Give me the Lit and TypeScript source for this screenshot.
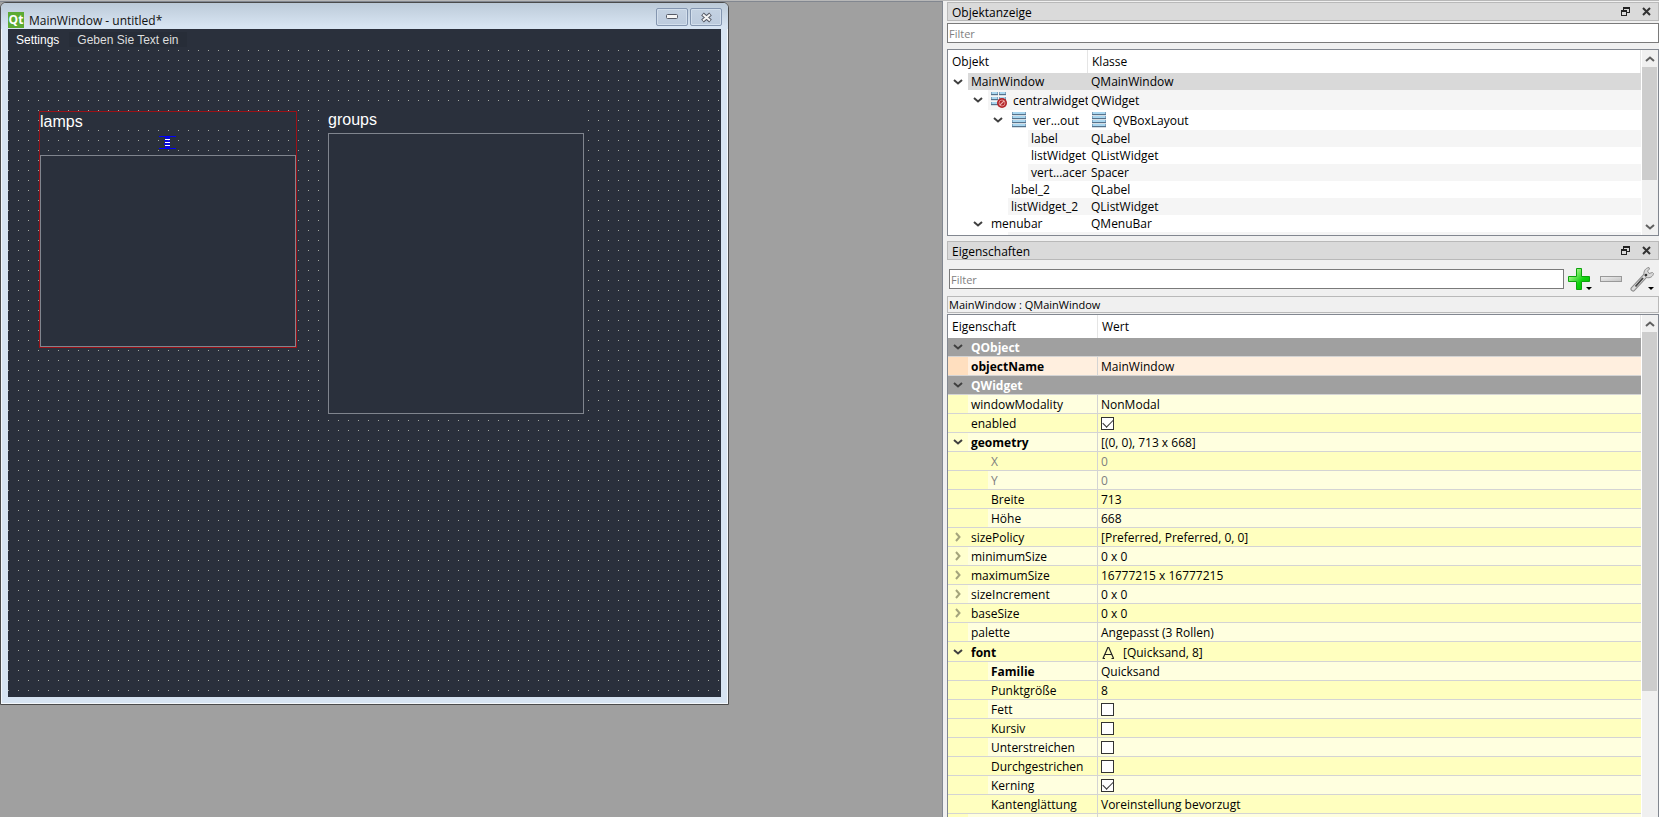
import { LitElement, html, css, svg, nothing } from "lit";
import { customElement } from "lit/decorators.js";
import { classMap } from "lit/directives/class-map.js";
import { styleMap } from "lit/directives/style-map.js";

type Icon = "layout" | "broken" | "font";

interface TreeNode {
  name: string;
  cls: string;
  depth: number;
  open?: boolean;
  icon?: Icon;
  clsIcon?: Icon;
  selected?: boolean;
}

interface Prop {
  name: string;
  value?: string;
  depth: number;
  group?: boolean;
  tone?: "peach";
  bold?: boolean;
  muted?: boolean;
  check?: boolean;
  state?: "open" | "closed";
  icon?: Icon;
}

const TREE: TreeNode[] = [
  { name: "MainWindow", cls: "QMainWindow", depth: 1, open: true, selected: true },
  { name: "centralwidget", cls: "QWidget", depth: 2, open: true, icon: "broken" },
  { name: "ver...out", cls: "QVBoxLayout", depth: 3, open: true, icon: "layout", clsIcon: "layout" },
  { name: "label", cls: "QLabel", depth: 4 },
  { name: "listWidget", cls: "QListWidget", depth: 4 },
  { name: "vert...acer", cls: "Spacer", depth: 4 },
  { name: "label_2", cls: "QLabel", depth: 3 },
  { name: "listWidget_2", cls: "QListWidget", depth: 3 },
  { name: "menubar", cls: "QMenuBar", depth: 2, open: true },
  { name: "", cls: "", depth: 3 },
];

const PROPS: Prop[] = [
  { name: "QObject", depth: 1, group: true, state: "open" },
  { name: "objectName", value: "MainWindow", depth: 1, bold: true, tone: "peach" },
  { name: "QWidget", depth: 1, group: true, state: "open" },
  { name: "windowModality", value: "NonModal", depth: 1 },
  { name: "enabled", check: true, depth: 1 },
  { name: "geometry", value: "[(0, 0), 713 x 668]", depth: 1, bold: true, state: "open" },
  { name: "X", value: "0", depth: 2, muted: true },
  { name: "Y", value: "0", depth: 2, muted: true },
  { name: "Breite", value: "713", depth: 2 },
  { name: "Höhe", value: "668", depth: 2 },
  { name: "sizePolicy", value: "[Preferred, Preferred, 0, 0]", depth: 1, state: "closed" },
  { name: "minimumSize", value: "0 x 0", depth: 1, state: "closed" },
  { name: "maximumSize", value: "16777215 x 16777215", depth: 1, state: "closed" },
  { name: "sizeIncrement", value: "0 x 0", depth: 1, state: "closed" },
  { name: "baseSize", value: "0 x 0", depth: 1, state: "closed" },
  { name: "palette", value: "Angepasst (3 Rollen)", depth: 1 },
  { name: "font", value: "[Quicksand, 8]", depth: 1, bold: true, state: "open", icon: "font" },
  { name: "Familie", value: "Quicksand", depth: 2, bold: true },
  { name: "Punktgröße", value: "8", depth: 2 },
  { name: "Fett", check: false, depth: 2 },
  { name: "Kursiv", check: false, depth: 2 },
  { name: "Unterstreichen", check: false, depth: 2 },
  { name: "Durchgestrichen", check: false, depth: 2 },
  { name: "Kerning", check: true, depth: 2 },
  { name: "Kantenglättung", value: "Voreinstellung bevorzugt", depth: 2 },
  { name: "", value: "", depth: 1 },
];

const bar = (x: number, y: number, w: number) => svg`
  <rect x=${x} y=${y} width=${w} height="3" fill="#7fa3bf"></rect>
  <rect x=${x + 1} y=${y} width=${w - 2} height="2" fill="#a9d6ef"></rect>
  <rect x=${x} y=${y + 2} width=${w} height="1" fill="#56738c"></rect>
  <rect x=${x} y=${y + 3} width=${w} height="1" fill="#d5dde4"></rect>`;

const icons: Record<Icon, unknown> = {
  layout: html`<svg class="icon" viewBox="0 0 16 16" shape-rendering="crispEdges" aria-hidden="true">
    ${[0, 4, 8, 12].map((y) => bar(1, y, 14))}
  </svg>`,
  broken: html`<svg class="icon" viewBox="0 0 16 16" aria-hidden="true">
    ${[0, 5, 10].map((y) => svg`${bar(0, y, 7)}${bar(8, y, 7)}`)}
    <circle cx="11" cy="11" r="5" fill="#b3262a"></circle>
    <circle cx="11" cy="11" r="3" fill="none" stroke="#e08a88" stroke-width="1"></circle>
    <path d="M8.8 13.2 13.2 8.8" stroke="#f0b5b3" stroke-width="1.2"></path>
  </svg>`,
  font: html`<svg class="icon" viewBox="0 0 16 16" aria-hidden="true">
    <path d="M2 14.5 6.8 3.5h1L12.600 14.500M3.800 10.500h7M1.500 14.500h2.500M10.500 14.500h2.500" fill="none" stroke="#222" stroke-width="1.2"></path>
  </svg>`,
};

const chevron = (dir: "down" | "right" | "up") => {
  const d = { down: "M1 3 5 6.500 9 3", up: "M1 7 5 3.500 9 7", right: "M3 1 6.500 5 3 9" }[dir];
  return html`<svg class="chev" viewBox="0 0 10 10" aria-hidden="true">
    <path d=${d} fill="none" stroke="currentColor" stroke-width="2"></path>
  </svg>`;
};

const shared = css`
  * { box-sizing: border-box; }
  button { appearance: none; border: 0; padding: 0; margin: 0; background: none; font: inherit; color: inherit; }
  svg { display: block; flex: none; }
  input { font: inherit; margin: 0; }
`;

const sheet = css`
  :host { display: flex; min-height: 0; background: #fff; border: 1px solid #828790; overflow: hidden; }
  .view { flex: 1; min-width: 0; overflow: hidden; }
  table { width: 100%; table-layout: fixed; border-collapse: separate; border-spacing: 0; }
  th { height: 23px; padding: 0 4px; text-align: left; font-weight: 400; border-right: 1px solid #e5e5e5; }
  td { padding: 0; white-space: nowrap; overflow: hidden; }
  .cell { display: flex; height: 100%; }
  .branch { flex: none; display: flex; justify-content: flex-end; align-items: center; }
  .twist { width: 20px; padding-right: 1px; display: flex; justify-content: center; color: #404040; }
  .text { flex: 1; min-width: 0; display: flex; align-items: center; gap: 6px; padding-left: 3px; }
  .icon { width: 16px; height: 16px; }
  .chev { width: 10px; height: 10px; }
`;

@customElement("scroll-bar")
class ScrollBar extends LitElement {
  static properties = { thumb: { type: Number } };
  declare thumb: number;
  static styles = [
    shared,
    css`
      :host { display: flex; flex-direction: column; width: 17px; flex: none; background: #f0f0f0; padding-right: 1px; border-left: 1px solid #fff; }
      button { height: 17px; flex: none; display: flex; align-items: center; justify-content: center; color: #606060; }
      .chev { width: 10px; height: 10px; }
      .track { flex: 1; min-height: 0; }
      .thumb { background: #cdcdcd; }
    `,
  ];
  render() {
    return html`
      <button aria-label="Nach oben">${chevron("up")}</button>
      <div class="track"><div class="thumb" style=${styleMap({ height: `${this.thumb}%` })}></div></div>
      <button aria-label="Nach unten">${chevron("down")}</button>
    `;
  }
}

@customElement("dock-title")
class DockTitle extends LitElement {
  static styles = [
    shared,
    css`
      :host { display: flex; align-items: center; height: 19px; flex: none; padding: 0 3px 0 4px; gap: 4px; background: #dadada; border: 1px solid #b9b9b9; }
      .name { flex: 1; padding-top: 2px; }
      button { width: 17px; height: 17px; display: grid; place-items: center; }
    `,
  ];
  render() {
    return html`
      <span class="name"><slot></slot></span>
      <button aria-label="Abdocken">
        <svg width="9" height="9" viewBox="0 0 9 9" shape-rendering="crispEdges" fill="#222">
          <path d="M2 0h7v6H6V5h2V2H3v1H2z"></path>
          <path d="M0 3h6v6H0zM1 5v3h4V5z" fill-rule="evenodd"></path>
        </svg>
      </button>
      <button aria-label="Schließen">
        <svg width="9" height="9" viewBox="0 0 9 9"><path d="M1 1l7 7M8 1 1 8" stroke="#333" stroke-width="2"></path></svg>
      </button>
    `;
  }
}

@customElement("object-tree")
class ObjectTree extends LitElement {
  static styles = [
    shared,
    sheet,
    css`
      .c1 { width: 140px; }
      tr { height: 17px; }
      tr.tall { height: 20px; }
      .tall .label { padding-top: 2px; }
      td { height: inherit; }
      .odd .text { background: #f5f5f5; }
      .selected .text { background: #d9d9d9; }
    `,
  ];
  render() {
    return html`
      <div class="view">
        <table>
          <thead><tr><th class="c1">Objekt</th><th>Klasse</th></tr></thead>
          <tbody>
            ${TREE.map(
              (n, i) => html`<tr class=${classMap({ tall: !!n.icon, odd: i % 2 === 1, selected: !!n.selected })}>
                <td><div class="cell">
                  <span class="branch" style=${styleMap({ width: `${n.depth * 20}px` })}>
                    ${n.open ? html`<button class="twist" aria-label="Zuklappen">${chevron("down")}</button>` : nothing}
                  </span>
                  <span class="text">${n.icon ? icons[n.icon] : nothing}<span class="label">${n.name}</span></span>
                </div></td>
                <td><div class="cell"><span class="text">${n.clsIcon ? icons[n.clsIcon] : nothing}<span class="label">${n.cls}</span></span></div></td>
              </tr>`
            )}
          </tbody>
        </table>
      </div>
      <scroll-bar .thumb=${75}></scroll-bar>
    `;
  }
}

@customElement("property-sheet")
class PropertySheet extends LitElement {
  static styles = [
    shared,
    sheet,
    css`
      .c1 { width: 150px; }
      th { height: 23px; }
      tbody tr { height: 19px; }
      tbody tr.tall { height: 20px; }
      td { height: inherit; border-bottom: 1px solid #d4d4d4; background: #ffffdf; }
      td:first-child:not([colspan]) { border-right: 1px solid #d4d4d4; }
      .branch { background: #ffffbf; }
      .parent .branch { background: #ffffcf; }
      .even td, .even .branch { background: #ffffbf; }
      .peach td { background: #ffefdf; }
      .peach .branch { background: #ffdfbf; }
      .group td, .group .branch { background: #a0a0a0; }
      .group { color: #fff; font-weight: 700; }
      .label { padding-top: 2px; }
      .bold td:first-child .label { font-weight: 700; }
      .muted { color: #808080; }
      .closed .twist { color: #a5a57c; }
      input { appearance: none; width: 13px; height: 13px; border: 1px solid #333; background: #fff; display: grid; place-items: center; }
      input:checked::after { content: ""; width: 9px; height: 5px; border: solid #333; border-width: 0 0 1px 1px; transform: translateY(-1px) rotate(-45deg); }
    `,
  ];
  private value(p: Prop) {
    if (p.check !== undefined) return html`<input type="checkbox" id=${p.name} .checked=${p.check} />`;
    return html`${p.icon ? icons[p.icon] : nothing}<span class="label">${p.value}</span>`;
  }
  render() {
    return html`
      <div class="view">
        <table>
          <thead><tr><th class="c1">Eigenschaft</th><th>Wert</th></tr></thead>
          <tbody>
            ${PROPS.map((p, i) => {
              const cls = {
                even: !p.group && !p.tone && i % 2 === 0,
                group: !!p.group,
                peach: p.tone === "peach",
                bold: !!p.bold,
                muted: !!p.muted,
                closed: p.state === "closed",
                parent: !!p.state,
                tall: !!p.icon,
              };
              return html`<tr class=${classMap(cls)}>
                <td colspan=${p.group ? 2 : nothing}><div class="cell">
                  <span class="branch" style=${styleMap({ width: `${p.depth * 20}px` })}>
                    ${p.state
                      ? html`<button class="twist" aria-label=${p.state === "open" ? "Zuklappen" : "Aufklappen"}>
                          ${chevron(p.state === "open" ? "down" : "right")}
                        </button>`
                      : nothing}
                  </span>
                  <span class="text">
                    ${p.check !== undefined
                      ? html`<label class="label" for=${p.name}>${p.name}</label>`
                      : html`<span class="label">${p.name}</span>`}
                  </span>
                </div></td>
                ${p.group ? nothing : html`<td><div class="cell"><span class="text">${this.value(p)}</span></div></td>`}
              </tr>`;
            })}
          </tbody>
        </table>
      </div>
      <scroll-bar .thumb=${74}></scroll-bar>
    `;
  }
}

@customElement("form-window")
class FormWindow extends LitElement {
  static styles = [
    shared,
    css`
      :host { display: block; width: 729px; padding: 0 6px 6px; background: #d7e4f2; border: 1px solid #4b4b4b; box-shadow: inset 0 0 0 1px #f4f8fc; border-radius: 6px 6px 0 0; }
      .frame { padding: 0 1px 1px; }
      .bar { display: flex; align-items: center; height: 26px; gap: 2px; margin: 0 -6px; padding: 2px 6px 0 7px; background: linear-gradient(#bccad8, #d7e4f2 90%); border-radius: 5px 5px 0 0; }
      .name { flex: 1; padding: 7px 0 0 3px; font-size: 12px; line-height: 18px; color: #111; }
      .logo { margin-top: 6px; width: 16px; height: 16px; background: #5caa33; color: #fff; font: 700 12px/15px "Open Sans", sans-serif; text-align: center; }
      .bar button { width: 32px; height: 18px; border: 1px solid #8496b0; border-radius: 2px; background: linear-gradient(#c4d2e2, #bccbdd); box-shadow: inset 0 0 0 1px #d3dfec; display: grid; place-items: center; }
      .client { height: 668px; background: #2a303c; color: #fff; font-family: "Liberation Sans", Arial, sans-serif; }
      .menu { display: flex; height: 21px; font-size: 12px; }
      .menu button { padding: 0 8px; }
      .menu .hint { color: #dedede; background: #272d38; margin: 3px 0 3px 2px; }
      .canvas { position: relative; height: 647px; }
      .grid { position: absolute; inset: 0; width: 100%; height: 100%; }
      .layout { position: absolute; left: 31px; top: 61px; width: 258px; height: 237px; border: 1px solid #9c1016; display: flex; flex-direction: column; }
      .title { height: 18px; font-size: 16px; line-height: 20px; background: #2a303c; }
      .list { border: 1px solid #80858e; background: #2a303c; }
      .layout .list { flex: 1; }
      .spacer { height: 25px; padding-top: 6px; display: flex; justify-content: center; align-items: flex-start; }
      .groups { position: absolute; left: 320px; top: 60px; width: 256px; }
      .groups .title { height: 23px; }
      .groups .list { height: 281px; }
    `,
  ];
  render() {
    return html`
      <div class="bar">
        <span class="logo">Qt</span>
        <span class="name">MainWindow - untitled*</span>
        <button aria-label="Minimieren">
          <svg width="12" height="6" viewBox="0 0 12 6"><rect x=".5" y=".5" width="11" height="4" rx="1" fill="#f5f5f5" stroke="#555a66"></rect></svg>
        </button>
        <button aria-label="Schließen">
          <svg width="13" height="11" viewBox="0 0 13 11">
            <path d="M2.500 2 10.500 9M10.500 2 2.500 9" stroke="#555a66" stroke-width="4"></path>
            <path d="M3 2.500 10 8.500M10 2.500 3 8.500" stroke="#f5f5f5" stroke-width="2"></path>
          </svg>
        </button>
      </div>
      <div class="frame">
        <div class="client">
          <div class="menu"><button>Settings</button><button class="hint">Geben Sie Text ein</button></div>
          <div class="canvas">
            <svg class="grid" shape-rendering="crispEdges" aria-hidden="true">
              <defs>
                <pattern id="dots" width="10" height="10" patternUnits="userSpaceOnUse">
                  <rect width="1" height="1" fill="#a3a69f"></rect>
                </pattern>
              </defs>
              <rect width="100%" height="100%" fill="url(#dots)"></rect>
            </svg>
            <div class="layout">
              <div class="title">lamps</div>
              <div class="spacer">
                <svg width="18" height="13" viewBox="0 0 18 13" shape-rendering="crispEdges">
                  <rect x="0" y="0" width="17" height="1" fill="#00f"></rect>
                  <rect x="0" y="12" width="17" height="1" fill="#00f"></rect>
                  <path d="M6 1h5v2H6zM5 4h6v1H5zM6 5h5v1H6zM5 7h6v2H5zM6 10h5v2H6z" fill="#00f" fill-opacity=".8"></path>
                  <path d="M6 3h5v1H6zM6 6h5v1H6zM6 9h5v1H6z" fill="#fff"></path>
                </svg>
              </div>
              <div class="list"></div>
            </div>
            <div class="groups">
              <div class="title">groups</div>
              <div class="list"></div>
            </div>
          </div>
        </div>
      </div>
    `;
  }
}

@customElement("app-root")
class AppRoot extends LitElement {
  static styles = [
    shared,
    css`
      :host { display: flex; box-sizing: border-box; height: 100vh; overflow: hidden; background: #f0f0f0; border-top: 1px solid #b8b8b8; font: 12px/16px "Open Sans", "Noto Sans", sans-serif; color: #000; }
      .mdi { flex: 1; min-width: 0; position: relative; background: #a0a0a0; border: solid #828790; border-width: 1px 1px 0 0; overflow: hidden; }
      form-window { position: absolute; left: 0; top: 0; }
      .dock { width: 716px; flex: none; display: flex; flex-direction: column; padding: 1px 0 0 4px; }
      .filter { height: 20px; width: 100%; border: 1px solid #7a7a7a; padding: 0 1px; background: #fff; border-radius: 0; font-size: 11px; }
      .filter::placeholder { color: #7f7f7f; opacity: 1; }
      .find { margin: 2px 0 6px; display: flex; flex: none; }
      object-tree { height: 187px; flex: none; margin-bottom: 5px; }
      .tools { display: flex; align-items: center; height: 36px; flex: none; padding: 2px 2px 0; }
      .tools .filter { flex: 1; width: auto; min-width: 0; }
      .tools button { width: 31px; height: 26px; display: grid; place-items: center; }
      .path { flex: none; height: 17px; margin-bottom: 1px; border: 1px solid #b9b9b9; padding: 0 1px; font-size: 11px; line-height: 15px; }
      property-sheet { flex: 1; border-bottom: 0; margin-bottom: -17px; }
    `,
  ];
  render() {
    return html`
      <main class="mdi"><form-window></form-window></main>
      <aside class="dock">
        <dock-title>Objektanzeige</dock-title>
        <div class="find"><input class="filter" placeholder="Filter" aria-label="Objekte filtern" /></div>
        <object-tree></object-tree>
        <dock-title>Eigenschaften</dock-title>
        <div class="tools">
          <input class="filter" placeholder="Filter" aria-label="Eigenschaften filtern" />
          <button aria-label="Hinzufügen">
            <svg width="24" height="24" viewBox="0 0 24 24">
              <defs><linearGradient id="g" x1="0" y1="0" x2="1" y2="1"><stop offset=".2" stop-color="#a6f58a"></stop><stop offset=".6" stop-color="#0fd20f"></stop><stop offset="1" stop-color="#00b800"></stop></linearGradient></defs>
              <path d="M8.500 1.500h5v8h8v5h-8v8h-5v-8h-8v-5h8z" fill="url(#g)" stroke="#0ca30c" stroke-linejoin="round"></path>
              <path d="M18 20h6l-3 3z" fill="#000"></path>
            </svg>
          </button>
          <button aria-label="Entfernen">
            <svg width="22" height="6" viewBox="0 0 22 6">
              <defs><linearGradient id="m" x1="0" y1="0" x2="1" y2="1"><stop offset="0" stop-color="#eee"></stop><stop offset="1" stop-color="#c4c4c4"></stop></linearGradient></defs>
              <rect x=".5" y=".5" width="21" height="5" fill="url(#m)" stroke="#999"></rect>
            </svg>
          </button>
          <button aria-label="Einstellungen">
            <svg width="26" height="26" viewBox="0 0 26 26">
              <path d="M4 23 16.500 9.500" stroke="#8a8a8a" stroke-width="5" stroke-linecap="round"></path>
              <path d="M4 23 17 9" stroke="#dcdcdc" stroke-width="3" stroke-linecap="round"></path>
              <path d="M6.500 20.500 14 12" stroke="#444" stroke-width="1.800"></path>
              <path d="M15 8.500c-.5-3.500 1.500-6.500 5-7l.5 1.500-2 2 1.500 2.500 3.500-1 1 1c-.5 3-3.500 5-7 4z" fill="#d8d8d8" stroke="#8f8f8f"></path>
              <circle cx="17" cy="9" r="1.300" fill="#333"></circle>
              <path d="M19 21h6l-3 3z" fill="#000"></path>
            </svg>
          </button>
        </div>
        <div class="path">MainWindow : QMainWindow</div>
        <property-sheet></property-sheet>
      </aside>
    `;
  }
}
